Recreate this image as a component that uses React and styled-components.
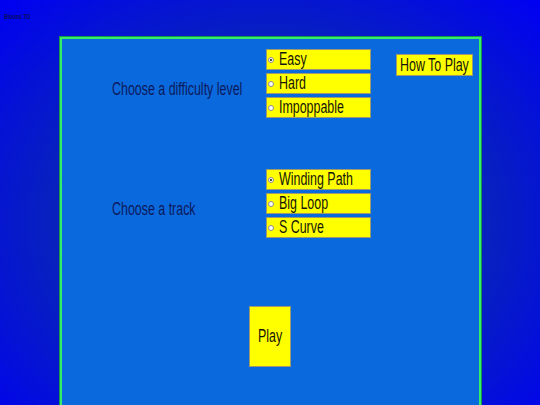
import React from "react";
import styled, { createGlobalStyle } from "styled-components";

const GlobalStyle = createGlobalStyle`
  html, body {
    margin: 0;
    height: 100%;
    overflow: hidden;
  }
  body {
    font-family: "Liberation Sans", Arial, sans-serif;
    background: radial-gradient(ellipse farthest-corner at 50% 55%, #0c3a96 0%, #0a2ab0 45%, #0000f2 100%);
  }
`;

const Page = styled.div`
  padding-top: 13px;
`;

const Title = styled.div`
  height: 8px;
  margin-left: 4px;
  font-size: 7px;
  line-height: 8px;
  font-weight: bold;
  color: #0a0a60;
  white-space: nowrap;
  transform: scaleX(0.75);
  transform-origin: left center;
`;

const Panel = styled.div`
  width: 417px;
  height: 400px;
  margin: 16px 0 0 60px;
  padding-top: 10px;
  background: #0b69de;
  border: 2px solid #33ee66;
  box-shadow: 0 0 0 1px #169a4a;
  display: flex;
  flex-direction: column;
`;

const Section = styled.div`
  display: grid;
  grid-template-columns: 154px 105px auto;
  padding-left: 50px;
  margin-top: ${(p) => p.$top || 0}px;
`;

const Prompt = styled.div`
  align-self: center;
  min-width: 0;
  margin-top: 11px;
  font-size: 17.5px;
  color: #0b1a5c;
  white-space: nowrap;
`;

const Squeeze = styled.span`
  display: inline-block;
  white-space: nowrap;
  transform: scaleX(0.71);
  transform-origin: ${(p) => (p.$center ? "center" : "left")} center;
`;

const Options = styled.div`
  display: flex;
  flex-direction: column;
  gap: 3px;
`;

const Option = styled.label`
  box-sizing: border-box;
  height: 21px;
  background: #ffff00;
  border: 1px solid #9a9a6a;
  display: flex;
  align-items: center;
  padding-left: 1px;
  font-size: 17.5px;
  color: #15150a;
  cursor: pointer;
`;

const Radio = styled.span`
  position: relative;
  box-sizing: border-box;
  width: 6px;
  height: 6px;
  margin-right: 5px;
  border-radius: 50%;
  border: 1px solid #8a8a8a;
  background: #fff;
  flex-shrink: 0;

  &::after {
    content: "";
    display: ${(p) => (p.$on ? "block" : "none")};
    position: absolute;
    left: 1px;
    top: 1px;
    width: 2px;
    height: 2px;
    border-radius: 50%;
    background: #111;
  }
`;

const HowTo = styled.button`
  align-self: start;
  box-sizing: border-box;
  width: 77px;
  height: 22px;
  margin: 5px 0 0 25px;
  padding: 0 0 0 3px;
  background: #ffff00;
  border: 1px solid #9a9a6a;
  font-family: inherit;
  font-size: 17.5px;
  color: #15150a;
  text-align: left;
  overflow: visible;
  cursor: pointer;
`;

const PlayButton = styled.button`
  align-self: center;
  margin-top: 68px;
  margin-left: -1px;
  box-sizing: border-box;
  width: 42px;
  height: 61px;
  padding: 0;
  background: #ffff00;
  border: 1px solid #9a9a6a;
  font-family: inherit;
  font-size: 17.5px;
  color: #15150a;
  display: flex;
  align-items: center;
  justify-content: center;
  cursor: pointer;
`;

const difficulties = ["Easy", "Hard", "Impoppable"];
const tracks = ["Winding Path", "Big Loop", "S Curve"];

function Choice({ items, selected }) {
  return (
    <Options>
      {items.map((name) => (
        <Option key={name}>
          <Radio $on={name === selected} />
          <Squeeze>{name}</Squeeze>
        </Option>
      ))}
    </Options>
  );
}

export default function App() {
  return (
    <>
      <GlobalStyle />
      <Page>
        <Title>Bloons TD</Title>
        <Panel>
          <Section>
            <Prompt>
              <Squeeze>Choose a difficulty level</Squeeze>
            </Prompt>
            <Choice items={difficulties} selected="Easy" />
            <HowTo>
              <Squeeze>How To Play</Squeeze>
            </HowTo>
          </Section>
          <Section $top={51}>
            <Prompt>
              <Squeeze>Choose a track</Squeeze>
            </Prompt>
            <Choice items={tracks} selected="Winding Path" />
          </Section>
          <PlayButton>
            <Squeeze $center>Play</Squeeze>
          </PlayButton>
        </Panel>
      </Page>
    </>
  );
}
